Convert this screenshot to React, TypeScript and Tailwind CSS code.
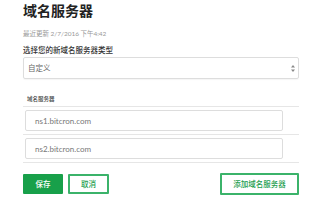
import React from 'react';

const rows = ['ns1.bitcron.com', 'ns2.bitcron.com'];

export default function App() {
  return (
    <div
      className="w-[320px] h-[200px] bg-white overflow-hidden pl-[23px] pr-[21px]"
      style={{ fontFamily: '"Noto Sans CJK SC", "Noto Sans", sans-serif' }}
    >
      {/* Header */}
      <h1 className="pt-[1px] text-[14px] leading-[18px] font-bold text-[#222]">域名服务器</h1>
      <div className="mt-[10px] text-[6.5px] leading-[8px] text-[#999]">
        最近更新 <span style={{ fontFamily: 'Lato, sans-serif' }}>2/7/2016</span> 下午<span style={{ fontFamily: 'Lato, sans-serif' }}>4:42</span>
      </div>

      {/* Type select */}
      <div className="mt-[7px] text-[7.5px] leading-[10px] font-medium text-[#333]">选择您的新域名服务器类型</div>
      <div className="mt-[2px] h-[22px] flex items-center justify-between border border-[#ddd] rounded-[2px] shadow-[0_1px_1px_rgba(0,0,0,0.04)] pl-[4px] pr-[3px]">
        <span className="text-[7.5px] text-[#666]">自定义</span>
        <svg width="4" height="7" viewBox="0 0 4 7" className="text-[#888]">
          <path d="M2 0 L4 2.6 L0 2.6 Z M2 7 L4 4.4 L0 4.4 Z" fill="currentColor" />
        </svg>
      </div>

      {/* Name servers */}
      <div className="mt-[16px] pl-[4px] text-[5.5px] leading-[8px] font-medium text-[#444]">域名服务器</div>
      <div className="mt-[3px] border-t border-[#e6e6e6]">
        {rows.map((r) => (
          <div key={r} className="pl-[2px] pr-[16px] py-[3px] border-b border-[#e6e6e6]">
            <div
              className="h-[21px] flex items-center border border-[#ddd] rounded-[2px] pl-[9px] text-[8px] text-[#777]"
              style={{ fontFamily: 'Lato, sans-serif' }}
            >
              {r}
            </div>
          </div>
        ))}
      </div>

      {/* Actions */}
      <div className="mt-[10px] flex items-center justify-between">
        <div className="flex gap-[5px]">
          <button className="w-[40px] h-[20px] bg-[#18a04a] text-white text-[7.5px] font-medium rounded-[1px]">保存</button>
          <button className="w-[41px] h-[20px] border-2 border-[#3bb36a] text-[#1e9e4f] text-[7.5px] font-medium rounded-[1px]">取消</button>
        </div>
        <button className="w-[79px] h-[22px] border-2 border-[#3bb36a] text-[#1e9e4f] text-[7.5px] font-medium rounded-[1px]">添加域名服务器</button>
      </div>
    </div>
  );
}
